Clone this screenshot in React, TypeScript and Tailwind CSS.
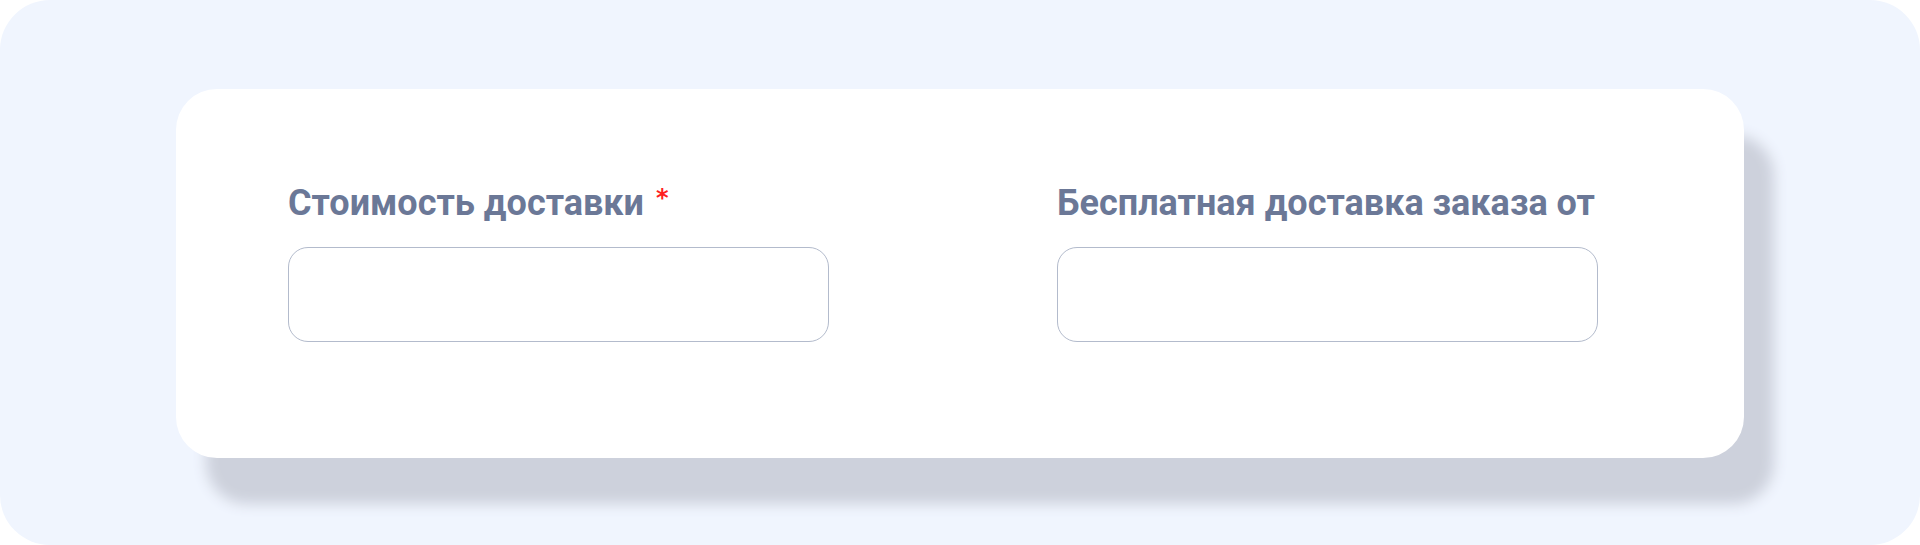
const fields = [
    { id: 'cost', label: 'Стоимость доставки', required: true },
    { id: 'free', label: 'Бесплатная доставка заказа от', required: false },
];

export default function App() {
    return (
        <div className="h-[545px] w-full bg-white">
            <div className="h-[545px] w-full rounded-[50px] bg-[#f0f5fe] pt-[89px] pl-[176px]">
                <div className="flex h-[369px] w-[1568px] gap-[228px] rounded-[41px] bg-white pt-[92px] pl-[112px] shadow-[30px_46px_14px_#cdd1dc]">
                    {fields.map((field) => (
                        <div key={field.id} className="flex w-[541px] flex-col">
                            <label
                                htmlFor={field.id}
                                className="flex items-start gap-[12px] font-['Roboto',sans-serif] text-[36px] leading-[44px] font-bold text-[#6b7897]"
                            >
                                <span className="whitespace-nowrap">{field.label}</span>
                                {field.required && (
                                    <span className="mt-[2px] font-['DejaVu_Sans',sans-serif] text-[24px] leading-[30px] font-bold text-[#ff1f1f]">
                                        *
                                    </span>
                                )}
                            </label>
                            <input
                                id={field.id}
                                type="text"
                                className="mt-[22px] h-[95px] w-full rounded-[20px] border border-[#b3bbcc] bg-white px-4 font-['Roboto',sans-serif] text-[24px] outline-none"
                            />
                        </div>
                    ))}
                </div>
            </div>
        </div>
    );
}
